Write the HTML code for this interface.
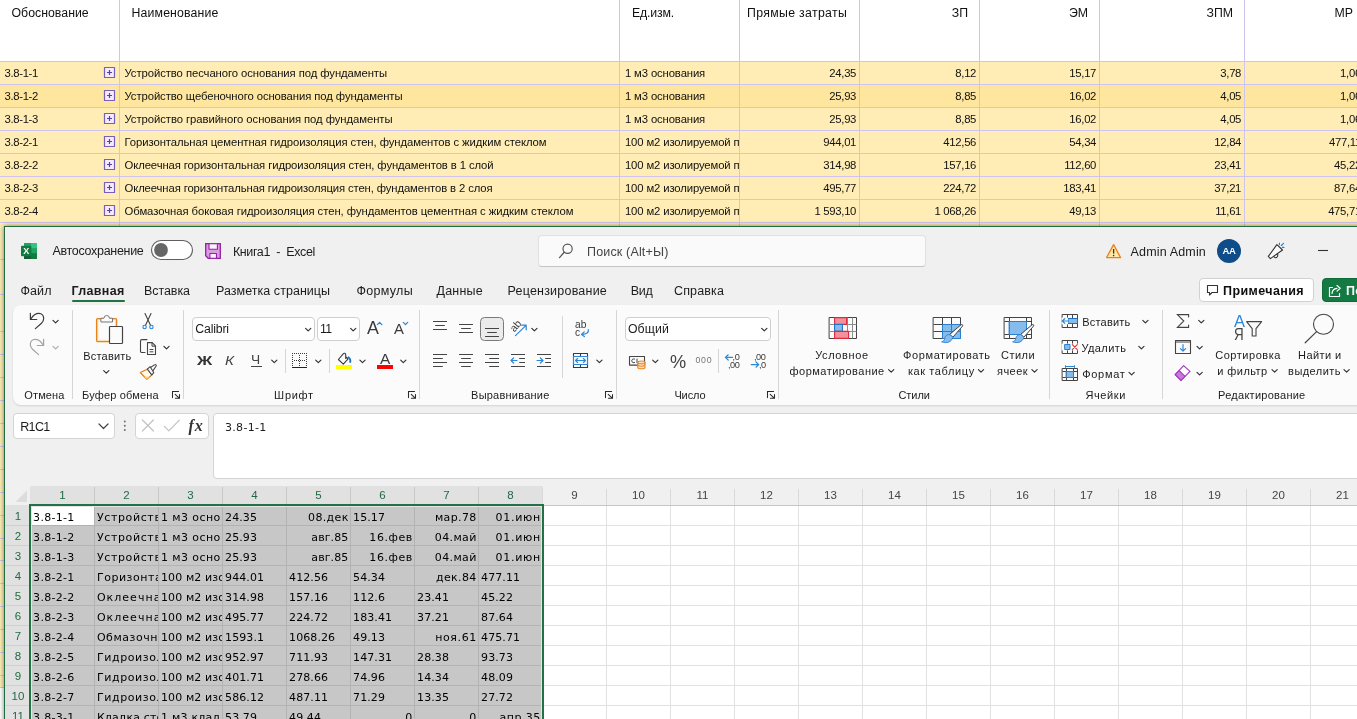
<!DOCTYPE html>
<html lang="ru"><head><meta charset="utf-8"><title>Excel</title>
<style>
html,body{margin:0;padding:0}
body{width:1357px;height:719px;overflow:hidden;position:relative;background:#FFEDB5;font-family:"Liberation Sans",sans-serif}
#bx div{position:absolute;box-sizing:border-box}
#tx{will-change:transform}
#tx span{position:absolute;white-space:pre;line-height:1;display:block}
#tx span.c{overflow:hidden}
#ic{position:absolute;left:0;top:0;width:1357px;height:719px;overflow:hidden;will-change:transform}
.dj{font-family:"DejaVu Sans","Liberation Sans",sans-serif}
.se{font-family:"Liberation Serif",serif}
</style></head><body>
<div id="bx">
<div style="left:0px;top:0px;width:1357px;height:61px;background:#FFFFFF;"></div>
<div style="left:0px;top:84px;width:1357px;height:23px;background:#FFE69E;"></div>
<div style="left:0px;top:61px;width:1357px;height:1px;background:#CDC4F0;"></div>
<div style="left:0px;top:84px;width:1357px;height:1px;background:#CDC4F0;"></div>
<div style="left:0px;top:107px;width:1357px;height:1px;background:#CDC4F0;"></div>
<div style="left:0px;top:130px;width:1357px;height:1px;background:#CDC4F0;"></div>
<div style="left:0px;top:153px;width:1357px;height:1px;background:#CDC4F0;"></div>
<div style="left:0px;top:176px;width:1357px;height:1px;background:#CDC4F0;"></div>
<div style="left:0px;top:199px;width:1357px;height:1px;background:#CDC4F0;"></div>
<div style="left:0px;top:222px;width:1357px;height:1px;background:#CDC4F0;"></div>
<div style="left:119px;top:0px;width:1px;height:226px;background:#CDC4F0;"></div>
<div style="left:619px;top:0px;width:1px;height:226px;background:#CDC4F0;"></div>
<div style="left:739px;top:0px;width:1px;height:226px;background:#CDC4F0;"></div>
<div style="left:859px;top:0px;width:1px;height:226px;background:#CDC4F0;"></div>
<div style="left:979px;top:0px;width:1px;height:226px;background:#CDC4F0;"></div>
<div style="left:1099px;top:0px;width:1px;height:226px;background:#CDC4F0;"></div>
<div style="left:1244px;top:0px;width:1px;height:226px;background:#CDC4F0;"></div>
<div style="left:0px;top:259px;width:4px;height:1px;background:#CDC4F0;"></div>
<div style="left:0px;top:294px;width:4px;height:1px;background:#CDC4F0;"></div>
<div style="left:0px;top:331px;width:4px;height:1px;background:#CDC4F0;"></div>
<div style="left:0px;top:354px;width:4px;height:1px;background:#CDC4F0;"></div>
<div style="left:0px;top:377px;width:4px;height:1px;background:#CDC4F0;"></div>
<div style="left:0px;top:400px;width:4px;height:1px;background:#CDC4F0;"></div>
<div style="left:0px;top:423px;width:4px;height:1px;background:#CDC4F0;"></div>
<div style="left:0px;top:446px;width:4px;height:1px;background:#CDC4F0;"></div>
<div style="left:0px;top:469px;width:4px;height:1px;background:#CDC4F0;"></div>
<div style="left:0px;top:492px;width:4px;height:1px;background:#CDC4F0;"></div>
<div style="left:0px;top:515px;width:4px;height:1px;background:#CDC4F0;"></div>
<div style="left:0px;top:538px;width:4px;height:1px;background:#CDC4F0;"></div>
<div style="left:0px;top:560px;width:4px;height:1px;background:#CDC4F0;"></div>
<div style="left:0px;top:583px;width:4px;height:1px;background:#CDC4F0;"></div>
<div style="left:0px;top:606px;width:4px;height:1px;background:#CDC4F0;"></div>
<div style="left:0px;top:629px;width:4px;height:1px;background:#CDC4F0;"></div>
<div style="left:0px;top:652px;width:4px;height:1px;background:#CDC4F0;"></div>
<div style="left:0px;top:675px;width:4px;height:1px;background:#CDC4F0;"></div>
<div style="left:0px;top:687px;width:4px;height:1px;background:#CDC4F0;"></div>
<div style="left:0px;top:688px;width:4px;height:40px;background:#FFFFFF;"></div>
<div style="left:4px;top:226px;width:1360px;height:500px;background:#F0F0F0;border-left:1px solid #1E6E42;border-top:1px solid #1E6E42;box-shadow:0 0 5px rgba(0,0,0,.5), inset 1px 1px 0 #FAF6F8"></div>
<div style="left:538px;top:235px;width:388px;height:32px;background:#FAFAFA;border:1px solid #E0E0E0;border-bottom-color:#C4C4C4;border-radius:4px"></div>
<div style="left:72px;top:300px;width:53px;height:2px;background:#217346;border-radius:1px"></div>
<div style="left:1199px;top:278px;width:115px;height:24px;background:#FFFFFF;border:1px solid #D1D1D1;border-radius:4px"></div>
<div style="left:1322px;top:278px;width:60px;height:24px;background:#127A42;border:1px solid #0F6B39;border-radius:4px"></div>
<div style="left:13px;top:305px;width:1360px;height:100px;background:#FBFBFB;border-radius:8px;box-shadow:0 1px 2px rgba(0,0,0,.12)"></div>
<div style="left:72px;top:310px;width:1px;height:89px;background:#D6D6D6;"></div>
<div style="left:183px;top:310px;width:1px;height:89px;background:#D6D6D6;"></div>
<div style="left:419px;top:310px;width:1px;height:89px;background:#D6D6D6;"></div>
<div style="left:616px;top:310px;width:1px;height:89px;background:#D6D6D6;"></div>
<div style="left:778px;top:310px;width:1px;height:89px;background:#D6D6D6;"></div>
<div style="left:1049px;top:310px;width:1px;height:89px;background:#D6D6D6;"></div>
<div style="left:1162px;top:310px;width:1px;height:89px;background:#D6D6D6;"></div>
<div style="left:562px;top:316px;width:1px;height:62px;background:#D6D6D6;"></div>
<div style="left:285px;top:349px;width:1px;height:24px;background:#D6D6D6;"></div>
<div style="left:329px;top:349px;width:1px;height:24px;background:#D6D6D6;"></div>
<div style="left:718px;top:349px;width:1px;height:24px;background:#D6D6D6;"></div>
<div style="left:192px;top:317px;width:123px;height:24px;background:#FFFFFF;border:1px solid #CFCFCF;border-radius:4px"></div>
<div style="left:317px;top:317px;width:43px;height:24px;background:#FFFFFF;border:1px solid #CFCFCF;border-radius:4px"></div>
<div style="left:625px;top:317px;width:146px;height:24px;background:#FFFFFF;border:1px solid #CFCFCF;border-radius:4px"></div>
<div style="left:480px;top:317px;width:24px;height:24px;background:#EBEBEB;border:1px solid #7A7A7A;border-radius:4.5px"></div>
<div style="left:251px;top:366px;width:10.5px;height:1px;background:#444;"></div>
<div style="left:13px;top:413px;width:102px;height:26px;background:#FFFFFF;border:1px solid #D4D4D4;border-radius:4px"></div>
<div style="left:135px;top:413px;width:74px;height:26px;background:#FFFFFF;border:1px solid #D4D4D4;border-radius:4px"></div>
<div style="left:213px;top:413px;width:1160px;height:66px;background:#FFFFFF;border:1px solid #D4D4D4;border-radius:4px"></div>
<div style="left:30px;top:505px;width:1327px;height:214px;background:#FFFFFF;"></div>
<div style="left:5px;top:486px;width:25px;height:19px;background:#F0F0F0;"></div>
<div style="left:30px;top:486px;width:513px;height:18px;background:#E1E1E1;"></div>
<div style="left:5px;top:505px;width:25px;height:214px;background:#E1E1E1;"></div>
<div style="left:543px;top:505px;width:814px;height:1px;background:#C6C6C6;"></div>
<div style="left:31px;top:506px;width:511px;height:213px;background:#C7C7C7;"></div>
<div style="left:31px;top:506px;width:63px;height:19px;background:#FFFFFF;"></div>
<div style="left:94px;top:487px;width:1px;height:17px;background:#C9C9C9;"></div>
<div style="left:94px;top:506px;width:1px;height:213px;background:#B3B3B3;"></div>
<div style="left:158px;top:487px;width:1px;height:17px;background:#C9C9C9;"></div>
<div style="left:158px;top:506px;width:1px;height:213px;background:#B3B3B3;"></div>
<div style="left:222px;top:487px;width:1px;height:17px;background:#C9C9C9;"></div>
<div style="left:222px;top:506px;width:1px;height:213px;background:#B3B3B3;"></div>
<div style="left:286px;top:487px;width:1px;height:17px;background:#C9C9C9;"></div>
<div style="left:286px;top:506px;width:1px;height:213px;background:#B3B3B3;"></div>
<div style="left:350px;top:487px;width:1px;height:17px;background:#C9C9C9;"></div>
<div style="left:350px;top:506px;width:1px;height:213px;background:#B3B3B3;"></div>
<div style="left:414px;top:487px;width:1px;height:17px;background:#C9C9C9;"></div>
<div style="left:414px;top:506px;width:1px;height:213px;background:#B3B3B3;"></div>
<div style="left:478px;top:487px;width:1px;height:17px;background:#C9C9C9;"></div>
<div style="left:478px;top:506px;width:1px;height:213px;background:#B3B3B3;"></div>
<div style="left:542px;top:489px;width:1px;height:16px;background:#D9D9D9;"></div>
<div style="left:606px;top:489px;width:1px;height:16px;background:#D9D9D9;"></div>
<div style="left:606px;top:506px;width:1px;height:213px;background:#E1E1E1;"></div>
<div style="left:670px;top:489px;width:1px;height:16px;background:#D9D9D9;"></div>
<div style="left:670px;top:506px;width:1px;height:213px;background:#E1E1E1;"></div>
<div style="left:734px;top:489px;width:1px;height:16px;background:#D9D9D9;"></div>
<div style="left:734px;top:506px;width:1px;height:213px;background:#E1E1E1;"></div>
<div style="left:798px;top:489px;width:1px;height:16px;background:#D9D9D9;"></div>
<div style="left:798px;top:506px;width:1px;height:213px;background:#E1E1E1;"></div>
<div style="left:862px;top:489px;width:1px;height:16px;background:#D9D9D9;"></div>
<div style="left:862px;top:506px;width:1px;height:213px;background:#E1E1E1;"></div>
<div style="left:926px;top:489px;width:1px;height:16px;background:#D9D9D9;"></div>
<div style="left:926px;top:506px;width:1px;height:213px;background:#E1E1E1;"></div>
<div style="left:990px;top:489px;width:1px;height:16px;background:#D9D9D9;"></div>
<div style="left:990px;top:506px;width:1px;height:213px;background:#E1E1E1;"></div>
<div style="left:1054px;top:489px;width:1px;height:16px;background:#D9D9D9;"></div>
<div style="left:1054px;top:506px;width:1px;height:213px;background:#E1E1E1;"></div>
<div style="left:1118px;top:489px;width:1px;height:16px;background:#D9D9D9;"></div>
<div style="left:1118px;top:506px;width:1px;height:213px;background:#E1E1E1;"></div>
<div style="left:1182px;top:489px;width:1px;height:16px;background:#D9D9D9;"></div>
<div style="left:1182px;top:506px;width:1px;height:213px;background:#E1E1E1;"></div>
<div style="left:1246px;top:489px;width:1px;height:16px;background:#D9D9D9;"></div>
<div style="left:1246px;top:506px;width:1px;height:213px;background:#E1E1E1;"></div>
<div style="left:1310px;top:489px;width:1px;height:16px;background:#D9D9D9;"></div>
<div style="left:1310px;top:506px;width:1px;height:213px;background:#E1E1E1;"></div>
<div style="left:31px;top:525px;width:511px;height:1px;background:#B3B3B3;"></div>
<div style="left:543px;top:525px;width:814px;height:1px;background:#E1E1E1;"></div>
<div style="left:5px;top:525px;width:24px;height:1px;background:#CFCFCF;"></div>
<div style="left:31px;top:545px;width:511px;height:1px;background:#B3B3B3;"></div>
<div style="left:543px;top:545px;width:814px;height:1px;background:#E1E1E1;"></div>
<div style="left:5px;top:545px;width:24px;height:1px;background:#CFCFCF;"></div>
<div style="left:31px;top:565px;width:511px;height:1px;background:#B3B3B3;"></div>
<div style="left:543px;top:565px;width:814px;height:1px;background:#E1E1E1;"></div>
<div style="left:5px;top:565px;width:24px;height:1px;background:#CFCFCF;"></div>
<div style="left:31px;top:585px;width:511px;height:1px;background:#B3B3B3;"></div>
<div style="left:543px;top:585px;width:814px;height:1px;background:#E1E1E1;"></div>
<div style="left:5px;top:585px;width:24px;height:1px;background:#CFCFCF;"></div>
<div style="left:31px;top:605px;width:511px;height:1px;background:#B3B3B3;"></div>
<div style="left:543px;top:605px;width:814px;height:1px;background:#E1E1E1;"></div>
<div style="left:5px;top:605px;width:24px;height:1px;background:#CFCFCF;"></div>
<div style="left:31px;top:625px;width:511px;height:1px;background:#B3B3B3;"></div>
<div style="left:543px;top:625px;width:814px;height:1px;background:#E1E1E1;"></div>
<div style="left:5px;top:625px;width:24px;height:1px;background:#CFCFCF;"></div>
<div style="left:31px;top:645px;width:511px;height:1px;background:#B3B3B3;"></div>
<div style="left:543px;top:645px;width:814px;height:1px;background:#E1E1E1;"></div>
<div style="left:5px;top:645px;width:24px;height:1px;background:#CFCFCF;"></div>
<div style="left:31px;top:665px;width:511px;height:1px;background:#B3B3B3;"></div>
<div style="left:543px;top:665px;width:814px;height:1px;background:#E1E1E1;"></div>
<div style="left:5px;top:665px;width:24px;height:1px;background:#CFCFCF;"></div>
<div style="left:31px;top:685px;width:511px;height:1px;background:#B3B3B3;"></div>
<div style="left:543px;top:685px;width:814px;height:1px;background:#E1E1E1;"></div>
<div style="left:5px;top:685px;width:24px;height:1px;background:#CFCFCF;"></div>
<div style="left:31px;top:705px;width:511px;height:1px;background:#B3B3B3;"></div>
<div style="left:543px;top:705px;width:814px;height:1px;background:#E1E1E1;"></div>
<div style="left:5px;top:705px;width:24px;height:1px;background:#CFCFCF;"></div>
<div style="left:29px;top:504px;width:515px;height:2px;background:#217346;"></div>
<div style="left:29px;top:504px;width:2px;height:215px;background:#217346;"></div>
<div style="left:542px;top:504px;width:2px;height:215px;background:#217346;"></div>
<div style="left:31px;top:506px;width:511px;height:1px;background:#E6E6E6;"></div>
<div style="left:31px;top:506px;width:1px;height:213px;background:#E6E6E6;"></div>
<div style="left:541px;top:506px;width:1px;height:213px;background:#E6E6E6;"></div>
</div>
<svg id="ic" width="1357" height="719" viewBox="0 0 1357 719" fill="none" stroke-linecap="round" stroke-linejoin="round">
<rect x="104.5" y="67.5" width="10" height="10" fill="#F3ECFF" stroke="#7A5DB8" stroke-width="1.2"/><path d="M107 72.5H112M109.5 70V75" stroke="#5B3FA0" stroke-width="1.2" stroke-linecap="butt"/>
<rect x="104.5" y="90.5" width="10" height="10" fill="#F3ECFF" stroke="#7A5DB8" stroke-width="1.2"/><path d="M107 95.5H112M109.5 93V98" stroke="#5B3FA0" stroke-width="1.2" stroke-linecap="butt"/>
<rect x="104.5" y="113.5" width="10" height="10" fill="#F3ECFF" stroke="#7A5DB8" stroke-width="1.2"/><path d="M107 118.5H112M109.5 116V121" stroke="#5B3FA0" stroke-width="1.2" stroke-linecap="butt"/>
<rect x="104.5" y="136.5" width="10" height="10" fill="#F3ECFF" stroke="#7A5DB8" stroke-width="1.2"/><path d="M107 141.5H112M109.5 139V144" stroke="#5B3FA0" stroke-width="1.2" stroke-linecap="butt"/>
<rect x="104.5" y="159.5" width="10" height="10" fill="#F3ECFF" stroke="#7A5DB8" stroke-width="1.2"/><path d="M107 164.5H112M109.5 162V167" stroke="#5B3FA0" stroke-width="1.2" stroke-linecap="butt"/>
<rect x="104.5" y="182.5" width="10" height="10" fill="#F3ECFF" stroke="#7A5DB8" stroke-width="1.2"/><path d="M107 187.5H112M109.5 185V190" stroke="#5B3FA0" stroke-width="1.2" stroke-linecap="butt"/>
<rect x="104.5" y="205.5" width="10" height="10" fill="#F3ECFF" stroke="#7A5DB8" stroke-width="1.2"/><path d="M107 210.5H112M109.5 208V213" stroke="#5B3FA0" stroke-width="1.2" stroke-linecap="butt"/>
<path d="M27 490.5V502H15.5Z" fill="#DCDCDC" stroke="none"/>
<path d="M53.00 320.40L55.60 322.90L58.20 320.40" stroke="#333333" stroke-width="1.2"/>
<path d="M103.70 370.60L106.30 373.10L108.90 370.60" stroke="#333333" stroke-width="1.2"/>
<path d="M163.90 346.40L166.50 348.90L169.10 346.40" stroke="#333333" stroke-width="1.2"/>
<path d="M305.60 328.40L308.20 330.90L310.80 328.40" stroke="#333333" stroke-width="1.2"/>
<path d="M350.60 328.40L353.20 330.90L355.80 328.40" stroke="#333333" stroke-width="1.2"/>
<path d="M271.70 360.10L274.30 362.60L276.90 360.10" stroke="#333333" stroke-width="1.2"/>
<path d="M315.70 360.10L318.30 362.60L320.90 360.10" stroke="#333333" stroke-width="1.2"/>
<path d="M359.90 360.10L362.50 362.60L365.10 360.10" stroke="#333333" stroke-width="1.2"/>
<path d="M400.70 360.10L403.30 362.60L405.90 360.10" stroke="#333333" stroke-width="1.2"/>
<path d="M531.80 328.40L534.40 330.90L537.00 328.40" stroke="#333333" stroke-width="1.2"/>
<path d="M596.80 360.10L599.40 362.60L602.00 360.10" stroke="#333333" stroke-width="1.2"/>
<path d="M652.70 360.10L655.30 362.60L657.90 360.10" stroke="#333333" stroke-width="1.2"/>
<path d="M761.70 328.40L764.30 330.90L766.90 328.40" stroke="#333333" stroke-width="1.2"/>
<path d="M888.60 369.60L891.20 372.10L893.80 369.60" stroke="#333333" stroke-width="1.2"/>
<path d="M978.40 369.60L981.00 372.10L983.60 369.60" stroke="#333333" stroke-width="1.2"/>
<path d="M1031.90 369.60L1034.50 372.10L1037.10 369.60" stroke="#333333" stroke-width="1.2"/>
<path d="M1142.80 320.40L1145.40 322.90L1148.00 320.40" stroke="#333333" stroke-width="1.2"/>
<path d="M1138.80 346.40L1141.40 348.90L1144.00 346.40" stroke="#333333" stroke-width="1.2"/>
<path d="M1129.00 372.40L1131.60 374.90L1134.20 372.40" stroke="#333333" stroke-width="1.2"/>
<path d="M1198.70 320.40L1201.30 322.90L1203.90 320.40" stroke="#333333" stroke-width="1.2"/>
<path d="M1197.00 346.40L1199.60 348.90L1202.20 346.40" stroke="#333333" stroke-width="1.2"/>
<path d="M1197.00 372.40L1199.60 374.90L1202.20 372.40" stroke="#333333" stroke-width="1.2"/>
<path d="M1272.00 369.60L1274.60 372.10L1277.20 369.60" stroke="#333333" stroke-width="1.2"/>
<path d="M1344.00 369.60L1346.60 372.10L1349.20 369.60" stroke="#333333" stroke-width="1.2"/>
<path d="M53.00 346.40L55.60 348.90L58.20 346.40" stroke="#ABABAB" stroke-width="1.2"/>
<path d="M99 424L103.5 428.5L108 424" stroke="#444" stroke-width="1.2"/>
<path d="M178.6 391.5H172.5V397.6M175.2 394.4L179.3 398.1M179.5 394.5V398.3H175.4" stroke="#2A2A2A" stroke-width="1.05" stroke-linecap="round" stroke-linejoin="miter"/>
<path d="M414.6 391.5H408.5V397.6M411.2 394.4L415.3 398.1M415.5 394.5V398.3H411.4" stroke="#2A2A2A" stroke-width="1.05" stroke-linecap="round" stroke-linejoin="miter"/>
<path d="M611.6 391.5H605.5V397.6M608.2 394.4L612.3 398.1M612.5 394.5V398.3H608.4" stroke="#2A2A2A" stroke-width="1.05" stroke-linecap="round" stroke-linejoin="miter"/>
<path d="M773.6 391.5H767.5V397.6M770.2 394.4L774.3 398.1M774.5 394.5V398.3H770.4" stroke="#2A2A2A" stroke-width="1.05" stroke-linecap="round" stroke-linejoin="miter"/>
<rect x="24" y="243" width="13" height="16" rx="1" fill="#21A366" stroke="none"/><rect x="31" y="243" width="6" height="5.3" fill="#33C481" stroke="none"/><rect x="24" y="243" width="7" height="5.3" fill="#21A366" stroke="none"/><rect x="24" y="248.3" width="7" height="5.3" fill="#107C41" stroke="none"/><rect x="31" y="248.3" width="6" height="5.3" fill="#21A366" stroke="none"/><rect x="24" y="253.6" width="13" height="5.4" fill="#185C37" stroke="none"/><rect x="31" y="253.6" width="6" height="5.4" fill="#107C41" stroke="none"/><rect x="21" y="245.8" width="10.4" height="10.4" rx="1" fill="#107C41" stroke="none"/><text x="26.2" y="254.3" font-family="Liberation Sans,sans-serif" font-size="9" font-weight="700" fill="#fff" stroke="none" text-anchor="middle">X</text>
<rect x="151.5" y="240.5" width="41" height="19" rx="9.5" fill="#FFFFFF" stroke="#606060" stroke-width="1.15"/><circle cx="161" cy="250" r="6.9" fill="#666666" stroke="none"/>
<path d="M205.7 243.7H220.3V258.3H208.2L205.7 255.8Z" fill="#DC9BE3" stroke="#951FA5" stroke-width="1.3" stroke-linejoin="miter"/><rect x="209" y="243.7" width="8.4" height="5.6" fill="#F7F3F8" stroke="#951FA5" stroke-width="1.1"/><rect x="209.9" y="253.5" width="6.6" height="4.8" fill="#F7F3F8" stroke="#951FA5" stroke-width="1.1"/>
<circle cx="567.6" cy="248.8" r="4.6" stroke="#555" stroke-width="1.2"/><path d="M564.2 252.3L559.5 257.6" stroke="#555" stroke-width="1.3"/>
<path d="M1113.6 244.6L1120.6 257.6H1106.6Z" fill="#FFE7A8" stroke="#E8821E" stroke-width="1.3"/><path d="M1113.6 249V253.6" stroke="#333" stroke-width="1.3" stroke-linecap="butt"/><circle cx="1113.6" cy="255.6" r="0.8" fill="#333" stroke="none"/>
<circle cx="1229" cy="251" r="12" fill="#0F4C8A" stroke="none"/><text x="1229" y="254.4" font-family="Liberation Sans,sans-serif" font-size="9.5" font-weight="700" fill="#fff" stroke="none" text-anchor="middle" letter-spacing="-0.3">AA</text>
<path d="M1276.9 244.6L1282.5 250L1270.4 258.6L1268.3 256.4Z" stroke="#333" stroke-width="1.1" fill="#FAFAFA"/><path d="M1273.8 256.4c.7 1.7 2.6 1.7 3.5.3c.6-1 .5-2.2.2-3.1" stroke="#333" stroke-width="1.1"/><path d="M1279.4 243.1v1.7M1281.3 245.5l2.3-2.2M1282.3 247.4h1.6" stroke="#1E7FD0" stroke-width="1.1"/>
<path d="M1318 250.5H1328" stroke="#333" stroke-width="1.1" stroke-linecap="butt"/>
<path d="M1207.5 285.5H1217.5V292.5H1212L1209.5 295V292.5H1207.5Z" stroke="#333" stroke-width="1.1" fill="none"/>
<path d="M1332.5 287.5H1329.5V296.5H1339.5V293.5" stroke="#fff" stroke-width="1.2"/><path d="M1332 293.5c.3-3.2 2.2-5 5-5.2M1337 285.5l3.2 2.8l-3.2 2.8" stroke="#fff" stroke-width="1.2"/>
<path d="M30.4 313.4V319.5H36.7" stroke="#3A3A3A" stroke-width="1.2"/><path d="M31 318.8C33 315.2 35.8 313.3 39 313.3C41.8 313.3 43.7 315.8 43.7 318.6C43.7 320.6 42.8 322 41.5 323.2L35.4 328.6" stroke="#3A3A3A" stroke-width="1.2"/>
<path d="M43.6 339.4V345.5H37.3" stroke="#A3A3A3" stroke-width="1.2"/><path d="M43 344.8C41 341.2 38.2 339.3 35 339.3C32.2 339.3 30.3 341.8 30.3 344.6C30.3 346.6 31.2 348 32.5 349.2L38.6 354.6" stroke="#A3A3A3" stroke-width="1.2"/>
<rect x="96.6" y="318.6" width="20" height="23" rx="1" fill="#FCE3B5" stroke="#E8821E" stroke-width="1.3"/><rect x="98.4" y="320.4" width="16.6" height="19.4" fill="#FBFBFB" stroke="none"/><path d="M100.9 321.6V318.2H104a2.7 2.7 0 0 1 5.4 0H112.5V321.6Z" fill="#FBFBFB" stroke="#777" stroke-width="1"/><rect x="109.5" y="326.5" width="13" height="17" rx="0.8" fill="#FBFBFB" stroke="#444" stroke-width="1.2"/>
<path d="M145 313.6L150.6 325.6M151 313.6L145.4 325.6" stroke="#444" stroke-width="1.1"/><circle cx="144.6" cy="327" r="1.7" stroke="#2B88D8" stroke-width="1.1"/><circle cx="151.4" cy="327" r="1.7" stroke="#2B88D8" stroke-width="1.1"/>
<path d="M147 339.6H141.8a1.3 1.3 0 0 0-1.3 1.3V351.2a1.3 1.3 0 0 0 1.3 1.3H145" stroke="#444" stroke-width="1.1"/><path d="M147.5 342.6H152.2L155.5 346V354.5H147.5Z" stroke="#444" stroke-width="1.1" fill="#FBFBFB"/><path d="M152 342.8V346.2H155.3" stroke="#444" stroke-width="1"/><path d="M149.6 349.5H153.4M149.6 351.8H153.4" stroke="#444" stroke-width="1" stroke-linecap="butt"/>
<path d="M140.3 372.5L147.2 369.2L152 374.8L146.8 379.4Z" fill="#FFF8EC" stroke="#E07B10" stroke-width="1.2"/><path d="M144.3 376.4L146.8 379.2L149.6 376.7Z" fill="#FFD56A" stroke="none"/><path d="M150.8 367.3L154.5 364.9a1 1 0 0 1 1.5 1.4L153 370.6" fill="#FBFBFB" stroke="#444" stroke-width="1.05"/><path d="M147.4 369L150.2 366.7L153.8 372.7L151.8 374.9Z" fill="#FBFBFB" stroke="#444" stroke-width="1.05"/>
<path d="M377.4 324.6L379.6 322.4L381.8 324.6" stroke="#2B88D8" stroke-width="1.3"/><path d="M403.3 322.4L405.5 324.6L407.7 322.4" stroke="#2B88D8" stroke-width="1.3"/>
<path d="M292 353h1v1h-1zM294 353h1v1h-1zM296 353h1v1h-1zM298 353h1v1h-1zM300 353h1v1h-1zM302 353h1v1h-1zM304 353h1v1h-1zM306 353h1v1h-1zM292 355h1v1h-1zM306 355h1v1h-1zM292 357h1v1h-1zM306 357h1v1h-1zM292 359h1v1h-1zM306 359h1v1h-1zM292 361h1v1h-1zM306 361h1v1h-1zM292 363h1v1h-1zM306 363h1v1h-1zM292 365h1v1h-1zM306 365h1v1h-1zM299 355h1v1h-1zM299 357h1v1h-1zM299 363h1v1h-1zM299 365h1v1h-1zM294 360h1v1h-1zM296 360h1v1h-1zM302 360h1v1h-1zM304 360h1v1h-1zM299 359h1v1h-1zM298 360h1v1h-1zM300 360h1v1h-1zM299 361h1v1h-1z" fill="#3A3A3A" stroke="none" shape-rendering="crispEdges"/>
<rect x="292" y="367" width="15" height="1" fill="#222" stroke="none" shape-rendering="crispEdges"/>
<path d="M345.7 358.4V354.9c0-1.7-1.5-2.2-2.5-1.1L338.4 359.5L343.3 364.1L348.1 358.9L346 357" stroke="#3A3A3A" stroke-width="1.1" fill="none"/><path d="M347.7 357c2.1.9 3.1 3 2.4 5.8" stroke="#1E74C8" stroke-width="1.9" stroke-linecap="butt"/><rect x="336" y="365" width="16" height="4" fill="#FFFF00" stroke="none"/>
<rect x="377" y="365" width="16" height="4" fill="#FF0000" stroke="none"/>
<path d="M433 321.5H447M435.2 325.5H444.8M433 329.5H447" stroke="#444" stroke-width="1.2" stroke-linecap="butt"/>
<path d="M459 324.5H473M461.2 328.5H470.8M459 332.5H473" stroke="#444" stroke-width="1.2" stroke-linecap="butt"/>
<path d="M485 328.5H499M487.2 332.5H496.8M485 336.5H499" stroke="#444" stroke-width="1.2" stroke-linecap="butt"/>
<path d="M433 354.5H447M433 358.5H442.8M433 362.5H447M433 366.5H442.8" stroke="#444" stroke-width="1.2" stroke-linecap="butt"/>
<path d="M459 354.5H473M461.2 358.5H470.8M459 362.5H473M461.2 366.5H470.8" stroke="#444" stroke-width="1.2" stroke-linecap="butt"/>
<path d="M485 354.5H499M489.2 358.5H499M485 362.5H499M489.2 366.5H499" stroke="#444" stroke-width="1.2" stroke-linecap="butt"/>
<path d="M511 354.5H525M519.2 358.5H525M519.2 362.5H525M511 366.5H525" stroke="#444" stroke-width="1.2" stroke-linecap="butt"/>
<path d="M517 360.5H511.2M513.6 358L511 360.5L513.6 363" stroke="#2B88D8" stroke-width="1.2"/>
<path d="M537 354.5H551M545.2 358.5H551M545.2 362.5H551M537 366.5H551" stroke="#444" stroke-width="1.2" stroke-linecap="butt"/>
<path d="M537 360.5H542.8M540.4 358L543 360.5L540.4 363" stroke="#2B88D8" stroke-width="1.2"/>
<text transform="translate(514.4,332.6) rotate(-50)" font-family="Liberation Sans,sans-serif" font-size="10.5" fill="#3A3A3A" stroke="none">ab</text><path d="M515.5 335.6L526 325.4M521.6 325.2H526.2V329.8" stroke="#2B88D8" stroke-width="1.2"/>
<text x="575" y="328" font-family="Liberation Sans,sans-serif" font-size="10.2" fill="#3A3A3A" stroke="none" letter-spacing="0.2">ab</text><text x="575" y="335.8" font-family="Liberation Sans,sans-serif" font-size="10.2" fill="#3A3A3A" stroke="none">c</text><path d="M588.3 329.6c.6 2.6-1.6 4.8-6.4 4.7M584.2 332L581.5 334.4L584.4 336.6" stroke="#2B88D8" stroke-width="1.25"/>
<rect x="573.5" y="353.5" width="14" height="14" stroke="#3A3A3A" stroke-width="1.1"/><path d="M580.5 353.5V356.5M580.5 364.5V367.5" stroke="#3A3A3A" stroke-width="1.1" stroke-linecap="butt"/><rect x="573.5" y="356.5" width="14" height="8" fill="#F2F8FD" stroke="#2B88D8" stroke-width="1.1"/><path d="M575.6 360.5H585.4M577.6 358.5L575.5 360.5L577.6 362.5M583.4 358.5L585.5 360.5L583.4 362.5" stroke="#2B88D8" stroke-width="1.1"/>
<rect x="629.5" y="356.5" width="15" height="8.6" stroke="#444" stroke-width="1.1"/><path d="M634.6 359a2 2 0 1 0 0 3.6M637 359v3.6" stroke="#444" stroke-width="1"/><path d="M637.8 362.4v5a3.6 1.4 0 0 0 7.2 0v-5" fill="#FBE1C4" stroke="#E8821E" stroke-width="1.1"/><ellipse cx="641.4" cy="362.4" rx="3.6" ry="1.4" fill="#FBE1C4" stroke="#E8821E" stroke-width="1.1"/><path d="M637.8 364.9a3.6 1.4 0 0 0 7.2 0" stroke="#E8821E" stroke-width="1"/>
<path d="M732.6 357.4H725.6M728.2 354.8L725.4 357.4L728.2 360" stroke="#2B88D8" stroke-width="1.2"/><text x="732.6" y="359.7" font-family="Liberation Sans,sans-serif" font-size="9.2" fill="#3A3A3A" stroke="none" letter-spacing="-0.45">,0</text><text x="727.9" y="367.9" font-family="Liberation Sans,sans-serif" font-size="9.2" fill="#3A3A3A" stroke="none" letter-spacing="-0.45">,00</text>
<text x="754" y="359.7" font-family="Liberation Sans,sans-serif" font-size="9.2" fill="#3A3A3A" stroke="none" letter-spacing="-0.45">,00</text><text x="758.9" y="367.9" font-family="Liberation Sans,sans-serif" font-size="9.2" fill="#3A3A3A" stroke="none" letter-spacing="-0.45">,0</text><path d="M751.2 364.6H758.6M756 362L758.8 364.6L756 367.2" stroke="#2B88D8" stroke-width="1.2"/>
<rect x="829.5" y="317.5" width="27" height="21" fill="#FBFBFB" stroke="#444" stroke-width="1"/><path d="M834.5 317.5V338.5M847.5 317.5V338.5M852.5 317.5V338.5M829.5 324.5H856.5M829.5 331.5H856.5" stroke="#8E8E8E" stroke-width="1" stroke-linecap="butt"/><rect x="834.6" y="317.6" width="12" height="6.8" fill="#F4909C" stroke="#D92B3A" stroke-width="1.1"/><rect x="834.6" y="324.5" width="7.8" height="6.8" fill="#84BCEC" stroke="#1E78C8" stroke-width="1.1"/><rect x="834.6" y="331.4" width="14" height="7" fill="#F4909C" stroke="#D92B3A" stroke-width="1.1"/>
<rect x="933.5" y="317.5" width="27" height="21" fill="#FBFBFB" stroke="#444" stroke-width="1"/><rect x="942.5" y="324.5" width="18" height="14" fill="#86BCEB" stroke="none"/><path d="M942.5 317.5V338.5M951.5 317.5V338.5M933.5 324.5H960.5M933.5 331.5H960.5" stroke="#444" stroke-width="1" stroke-linecap="butt"/><path d="M942.5 324.5V338.5H960.5V324.5ZM951.5 324.5V338.5M942.5 331.5H960.5" stroke="#2B7FD0" stroke-width="1" stroke-linecap="butt"/>
<path d="M961.4 324.6c1-.4 1.8.4 1.2 1.4L952.9 337.20000000000005L949.8 334.8Z" fill="#FBFBFB" stroke="#444" stroke-width="1"/><path d="M949.6 334.6c-3.6-.2-4.6 2-5 4.6c-.2 1.2-1.4 2.2-3 2.6c4.6 1.8 10.4.6 11.2-4.6Z" fill="#86BCEB" stroke="#2B7FD0" stroke-width="0.9"/>
<rect x="1004.5" y="317.5" width="27" height="21" fill="#FBFBFB" stroke="#444" stroke-width="1"/><path d="M1009.5 317.5V338.5M1026.5 317.5V338.5M1004.5 321.5H1031.5M1004.5 334.5H1031.5" stroke="#444" stroke-width="1" stroke-linecap="butt"/><rect x="1009.5" y="321.5" width="17" height="13" fill="#86BCEB" stroke="#2B7FD0" stroke-width="1"/>
<path d="M1032.4 324.6c1-.4 1.8.4 1.2 1.4L1023.9000000000001 337.20000000000005L1020.8000000000001 334.8Z" fill="#FBFBFB" stroke="#444" stroke-width="1"/><path d="M1020.6000000000001 334.6c-3.6-.2-4.6 2-5 4.6c-.2 1.2-1.4 2.2-3 2.6c4.6 1.8 10.4.6 11.2-4.6Z" fill="#86BCEB" stroke="#2B7FD0" stroke-width="0.9"/>
<rect x="1062.5" y="314.5" width="15" height="13" fill="#FBFBFB" stroke="#444" stroke-width="1"/><path d="M1067.5 314.5V327.5M1072.5 314.5V327.5M1062.5 318.5H1077.5M1062.5 323.5H1077.5" stroke="#444" stroke-width="1" stroke-linecap="butt"/><rect x="1068.5" y="318.5" width="9" height="5" fill="#86BCEB" stroke="#1E6FC0" stroke-width="1"/><rect x="1061.5" y="317.6" width="6.5" height="6.8" fill="#FBFBFB" stroke="none"/><path d="M1068.4 321H1062.4M1064.8 318.6L1062.2 321L1064.8 323.4" stroke="#2B88D8" stroke-width="1.2"/>
<rect x="1062.5" y="340.5" width="15" height="13" fill="#FBFBFB" stroke="#444" stroke-width="1"/><path d="M1067.5 340.5V353.5M1072.5 340.5V353.5M1062.5 344.5H1077.5M1062.5 349.5H1077.5" stroke="#444" stroke-width="1" stroke-linecap="butt"/><rect x="1061.5" y="343.6" width="17.5" height="6.8" fill="#FBFBFB" stroke="none"/><rect x="1065" y="344.5" width="5" height="5" fill="#86BCEB" stroke="#2B7FD0" stroke-width="1"/><path d="M1072.3 344.6L1077.3 349.6M1077.3 344.6L1072.3 349.6" stroke="#E03030" stroke-width="1.1"/>
<path d="M1065.5 365.2V367.8M1074.5 365.2V367.8M1065.5 366.5H1074.5" stroke="#2B88D8" stroke-width="1" stroke-linecap="butt"/><rect x="1062.5" y="368.5" width="15" height="12" fill="#FBFBFB" stroke="#444" stroke-width="1"/><path d="M1066.5 368.5V380.5M1073.5 368.5V380.5M1062.5 371.5H1077.5M1062.5 377.5H1077.5" stroke="#444" stroke-width="1" stroke-linecap="butt"/><rect x="1066.5" y="371.5" width="7" height="6" fill="#86BCEB" stroke="#2B7FD0" stroke-width="1"/>
<path d="M1188.6 317V314.6H1177.4L1183.8 321L1177.4 327.4H1188.6V325" stroke="#444" stroke-width="1.1" stroke-linejoin="miter"/>
<rect x="1175.5" y="340.5" width="15" height="13" fill="#FBFBFB" stroke="#444" stroke-width="1.1"/><path d="M1175.5 342H1190.5" stroke="#444" stroke-width="1" stroke-linecap="butt"/><path d="M1183 344.6V351M1180.4 348.6L1183 351.2L1185.6 348.6" stroke="#2B88D8" stroke-width="1.2"/>
<path d="M1183.6 365.6L1190 371.4L1181 380.4L1175.2 374.6Z" fill="#FBFBFB" stroke="#A33BC2" stroke-width="1.2"/><path d="M1179.2 370.6L1185 376.4L1181 380.4L1175.2 374.6Z" fill="#C97AD8" stroke="#A33BC2" stroke-width="1.2"/>
<path d="M1246.6 321.6H1261.6L1256 328.6V336H1252.2V328.6Z" stroke="#444" stroke-width="1.1" fill="#FBFBFB"/>
<circle cx="1323.5" cy="324.3" r="10" stroke="#444" stroke-width="1.1"/><path d="M1316.6 331.6L1305.2 342.8" stroke="#444" stroke-width="1.2"/>
<circle cx="124.8" cy="421.5" r="1" fill="#707070" stroke="none"/><circle cx="124.8" cy="425.7" r="1" fill="#707070" stroke="none"/><circle cx="124.8" cy="429.9" r="1" fill="#707070" stroke="none"/>
<path d="M142.4 420L153.4 431M153.4 420L142.4 431" stroke="#C2C2C2" stroke-width="1.2"/><path d="M164.4 426.4L168.8 430.8L179.4 420.2" stroke="#C2C2C2" stroke-width="1.2"/>
</svg>
<div id="tx">
<span style="top:6.85px;font-size:12.3px;color:#111111;letter-spacing:0.021px;left:11.50px">Обоснование</span>
<span style="top:6.85px;font-size:12.3px;color:#111111;letter-spacing:0.146px;left:131.50px">Наименование</span>
<span style="top:6.85px;font-size:12.3px;color:#111111;letter-spacing:-0.153px;left:631.90px">Ед.изм.</span>
<span style="top:6.85px;font-size:12.3px;color:#111111;letter-spacing:0.331px;left:747.00px">Прямые затраты</span>
<span style="top:6.85px;font-size:12.3px;color:#111111;right:389.00px">ЗП</span>
<span style="top:6.85px;font-size:12.3px;color:#111111;right:269.00px">ЭМ</span>
<span style="top:6.85px;font-size:12.3px;color:#111111;right:124.00px">ЗПМ</span>
<span style="top:6.85px;font-size:12.3px;color:#111111;right:4.00px">МР</span>
<span style="top:67.55px;font-size:11.3px;color:#111111;letter-spacing:-0.328px;left:4.50px">3.8-1-1</span>
<span style="top:67.55px;font-size:11.3px;color:#111111;letter-spacing:-0.077px;left:124.50px">Устройство песчаного основания под фундаменты</span>
<span class="c" style="top:67.55px;font-size:11.3px;color:#111111;left:624.90px;width:114.10px;letter-spacing:-0.12px">1 м3 основания</span>
<span style="top:67.55px;font-size:11.3px;color:#111111;right:500.90px;letter-spacing:-0.3px">24,35</span>
<span style="top:67.55px;font-size:11.3px;color:#111111;right:380.90px;letter-spacing:-0.3px">8,12</span>
<span style="top:67.55px;font-size:11.3px;color:#111111;right:260.90px;letter-spacing:-0.3px">15,17</span>
<span style="top:67.55px;font-size:11.3px;color:#111111;right:115.90px;letter-spacing:-0.3px">3,78</span>
<span style="top:67.55px;font-size:11.3px;color:#111111;right:-3.90px;letter-spacing:-0.3px">1,06</span>
<span style="top:90.55px;font-size:11.3px;color:#111111;letter-spacing:-0.328px;left:4.50px">3.8-1-2</span>
<span style="top:90.55px;font-size:11.3px;color:#111111;letter-spacing:-0.085px;left:124.50px">Устройство щебеночного основания под фундаменты</span>
<span class="c" style="top:90.55px;font-size:11.3px;color:#111111;left:624.90px;width:114.10px;letter-spacing:-0.12px">1 м3 основания</span>
<span style="top:90.55px;font-size:11.3px;color:#111111;right:500.90px;letter-spacing:-0.3px">25,93</span>
<span style="top:90.55px;font-size:11.3px;color:#111111;right:380.90px;letter-spacing:-0.3px">8,85</span>
<span style="top:90.55px;font-size:11.3px;color:#111111;right:260.90px;letter-spacing:-0.3px">16,02</span>
<span style="top:90.55px;font-size:11.3px;color:#111111;right:115.90px;letter-spacing:-0.3px">4,05</span>
<span style="top:90.55px;font-size:11.3px;color:#111111;right:-3.90px;letter-spacing:-0.3px">1,06</span>
<span style="top:113.55px;font-size:11.3px;color:#111111;letter-spacing:-0.328px;left:4.50px">3.8-1-3</span>
<span style="top:113.55px;font-size:11.3px;color:#111111;letter-spacing:-0.069px;left:124.50px">Устройство гравийного основания под фундаменты</span>
<span class="c" style="top:113.55px;font-size:11.3px;color:#111111;left:624.90px;width:114.10px;letter-spacing:-0.12px">1 м3 основания</span>
<span style="top:113.55px;font-size:11.3px;color:#111111;right:500.90px;letter-spacing:-0.3px">25,93</span>
<span style="top:113.55px;font-size:11.3px;color:#111111;right:380.90px;letter-spacing:-0.3px">8,85</span>
<span style="top:113.55px;font-size:11.3px;color:#111111;right:260.90px;letter-spacing:-0.3px">16,02</span>
<span style="top:113.55px;font-size:11.3px;color:#111111;right:115.90px;letter-spacing:-0.3px">4,05</span>
<span style="top:113.55px;font-size:11.3px;color:#111111;right:-3.90px;letter-spacing:-0.3px">1,06</span>
<span style="top:136.55px;font-size:11.3px;color:#111111;letter-spacing:-0.328px;left:4.50px">3.8-2-1</span>
<span style="top:136.55px;font-size:11.3px;color:#111111;letter-spacing:-0.074px;left:124.50px">Горизонтальная цементная гидроизоляция стен, фундаментов с жидким стеклом</span>
<span class="c" style="top:136.55px;font-size:11.3px;color:#111111;left:624.90px;width:114.10px;letter-spacing:-0.12px">100 м2 изолируемой поверхности</span>
<span style="top:136.55px;font-size:11.3px;color:#111111;right:500.90px;letter-spacing:-0.3px">944,01</span>
<span style="top:136.55px;font-size:11.3px;color:#111111;right:380.90px;letter-spacing:-0.3px">412,56</span>
<span style="top:136.55px;font-size:11.3px;color:#111111;right:260.90px;letter-spacing:-0.3px">54,34</span>
<span style="top:136.55px;font-size:11.3px;color:#111111;right:115.90px;letter-spacing:-0.3px">12,84</span>
<span style="top:136.55px;font-size:11.3px;color:#111111;right:-3.90px;letter-spacing:-0.3px">477,11</span>
<span style="top:159.55px;font-size:11.3px;color:#111111;letter-spacing:-0.328px;left:4.50px">3.8-2-2</span>
<span style="top:159.55px;font-size:11.3px;color:#111111;letter-spacing:-0.102px;left:124.50px">Оклеечная горизонтальная гидроизоляция стен, фундаментов в 1 слой</span>
<span class="c" style="top:159.55px;font-size:11.3px;color:#111111;left:624.90px;width:114.10px;letter-spacing:-0.12px">100 м2 изолируемой поверхности</span>
<span style="top:159.55px;font-size:11.3px;color:#111111;right:500.90px;letter-spacing:-0.3px">314,98</span>
<span style="top:159.55px;font-size:11.3px;color:#111111;right:380.90px;letter-spacing:-0.3px">157,16</span>
<span style="top:159.55px;font-size:11.3px;color:#111111;right:260.90px;letter-spacing:-0.3px">112,60</span>
<span style="top:159.55px;font-size:11.3px;color:#111111;right:115.90px;letter-spacing:-0.3px">23,41</span>
<span style="top:159.55px;font-size:11.3px;color:#111111;right:-3.90px;letter-spacing:-0.3px">45,22</span>
<span style="top:182.55px;font-size:11.3px;color:#111111;letter-spacing:-0.328px;left:4.50px">3.8-2-3</span>
<span style="top:182.55px;font-size:11.3px;color:#111111;letter-spacing:-0.115px;left:124.50px">Оклеечная горизонтальная гидроизоляция стен, фундаментов в 2 слоя</span>
<span class="c" style="top:182.55px;font-size:11.3px;color:#111111;left:624.90px;width:114.10px;letter-spacing:-0.12px">100 м2 изолируемой поверхности</span>
<span style="top:182.55px;font-size:11.3px;color:#111111;right:500.90px;letter-spacing:-0.3px">495,77</span>
<span style="top:182.55px;font-size:11.3px;color:#111111;right:380.90px;letter-spacing:-0.3px">224,72</span>
<span style="top:182.55px;font-size:11.3px;color:#111111;right:260.90px;letter-spacing:-0.3px">183,41</span>
<span style="top:182.55px;font-size:11.3px;color:#111111;right:115.90px;letter-spacing:-0.3px">37,21</span>
<span style="top:182.55px;font-size:11.3px;color:#111111;right:-3.90px;letter-spacing:-0.3px">87,64</span>
<span style="top:205.55px;font-size:11.3px;color:#111111;letter-spacing:-0.328px;left:4.50px">3.8-2-4</span>
<span style="top:205.55px;font-size:11.3px;color:#111111;letter-spacing:-0.055px;left:124.50px">Обмазочная боковая гидроизоляция стен, фундаментов цементная с жидким стеклом</span>
<span class="c" style="top:205.55px;font-size:11.3px;color:#111111;left:624.90px;width:114.10px;letter-spacing:-0.12px">100 м2 изолируемой поверхности</span>
<span style="top:205.55px;font-size:11.3px;color:#111111;right:500.90px;letter-spacing:-0.3px">1 593,10</span>
<span style="top:205.55px;font-size:11.3px;color:#111111;right:380.90px;letter-spacing:-0.3px">1 068,26</span>
<span style="top:205.55px;font-size:11.3px;color:#111111;right:260.90px;letter-spacing:-0.3px">49,13</span>
<span style="top:205.55px;font-size:11.3px;color:#111111;right:115.90px;letter-spacing:-0.3px">11,61</span>
<span style="top:205.55px;font-size:11.3px;color:#111111;right:-3.90px;letter-spacing:-0.3px">475,71</span>
<span style="top:244.75px;font-size:12.5px;color:#1C1C1C;letter-spacing:-0.307px;left:52.50px">Автосохранение</span>
<span style="top:245.75px;font-size:12.5px;color:#1C1C1C;letter-spacing:-0.374px;left:232.90px">Книга1  -  Excel</span>
<span style="top:245.75px;font-size:12.5px;color:#444;letter-spacing:0.162px;left:587.00px">Поиск (Alt+Ы)</span>
<span style="top:245.75px;font-size:12.5px;color:#1C1C1C;letter-spacing:0.168px;left:1130.50px">Admin Admin</span>
<span style="top:284.75px;font-size:12.5px;color:#1C1C1C;letter-spacing:0.066px;left:20.50px">Файл</span>
<span style="top:284.75px;font-size:12.5px;color:#1C1C1C;font-weight:700;letter-spacing:0.308px;left:71.50px">Главная</span>
<span style="top:284.75px;font-size:12.5px;color:#1C1C1C;letter-spacing:-0.067px;left:144.00px">Вставка</span>
<span style="top:284.75px;font-size:12.5px;color:#1C1C1C;letter-spacing:0.041px;left:216.00px">Разметка страницы</span>
<span style="top:284.75px;font-size:12.5px;color:#1C1C1C;letter-spacing:0.299px;left:356.50px">Формулы</span>
<span style="top:284.75px;font-size:12.5px;color:#1C1C1C;letter-spacing:0.221px;left:436.50px">Данные</span>
<span style="top:284.75px;font-size:12.5px;color:#1C1C1C;letter-spacing:0.212px;left:507.50px">Рецензирование</span>
<span style="top:284.75px;font-size:12.5px;color:#1C1C1C;letter-spacing:-0.308px;left:630.80px">Вид</span>
<span style="top:284.75px;font-size:12.5px;color:#1C1C1C;letter-spacing:0.136px;left:674.00px">Справка</span>
<span style="top:284.75px;font-size:12.5px;color:#0F0F0F;font-weight:700;letter-spacing:0.406px;left:1223.00px">Примечания</span>
<span style="top:284.75px;font-size:12.5px;color:#FFFFFF;font-weight:700;left:1345.90px;letter-spacing:0.4px">По</span>
<span style="top:322.85px;font-size:12.3px;color:#1C1C1C;letter-spacing:-0.180px;left:195.30px">Calibri</span>
<span style="top:322.85px;font-size:12.3px;color:#1C1C1C;letter-spacing:-0.683px;left:320.10px">11</span>
<span style="top:322.85px;font-size:12.3px;color:#1C1C1C;letter-spacing:0.126px;left:627.90px">Общий</span>
<span style="top:389.50px;font-size:11px;color:#1C1C1C;letter-spacing:0.122px;left:24.30px">Отмена</span>
<span style="top:389.50px;font-size:11px;color:#1C1C1C;letter-spacing:0.179px;left:82.00px">Буфер обмена</span>
<span style="top:389.50px;font-size:11px;color:#1C1C1C;letter-spacing:0.719px;left:274.10px">Шрифт</span>
<span style="top:389.50px;font-size:11px;color:#1C1C1C;letter-spacing:0.223px;left:471.10px">Выравнивание</span>
<span style="top:389.50px;font-size:11px;color:#1C1C1C;letter-spacing:-0.108px;left:674.40px">Число</span>
<span style="top:389.50px;font-size:11px;color:#1C1C1C;letter-spacing:-0.041px;left:898.40px">Стили</span>
<span style="top:389.50px;font-size:11px;color:#1C1C1C;letter-spacing:0.599px;left:1085.50px">Ячейки</span>
<span style="top:389.50px;font-size:11px;color:#1C1C1C;letter-spacing:0.257px;left:1218.10px">Редактирование</span>
<span style="top:350.50px;font-size:11px;color:#1C1C1C;letter-spacing:0.207px;left:83.20px">Вставить</span>
<span style="top:349.50px;font-size:11px;color:#1C1C1C;letter-spacing:0.628px;left:815.20px">Условное</span>
<span style="top:365.50px;font-size:11px;color:#1C1C1C;letter-spacing:0.491px;left:789.50px">форматирование</span>
<span style="top:349.50px;font-size:11px;color:#1C1C1C;letter-spacing:0.598px;left:903.10px">Форматировать</span>
<span style="top:365.50px;font-size:11px;color:#1C1C1C;letter-spacing:0.605px;left:907.90px">как таблицу</span>
<span style="top:349.50px;font-size:11px;color:#1C1C1C;letter-spacing:0.439px;left:1001.10px">Стили</span>
<span style="top:365.50px;font-size:11px;color:#1C1C1C;letter-spacing:0.410px;left:997.10px">ячеек</span>
<span style="top:316.50px;font-size:11px;color:#1C1C1C;letter-spacing:0.207px;left:1082.20px">Вставить</span>
<span style="top:342.50px;font-size:11px;color:#1C1C1C;letter-spacing:0.400px;left:1081.50px">Удалить</span>
<span style="top:368.50px;font-size:11px;color:#1C1C1C;letter-spacing:0.704px;left:1082.20px">Формат</span>
<span style="top:349.50px;font-size:11px;color:#1C1C1C;letter-spacing:0.542px;left:1215.20px">Сортировка</span>
<span style="top:365.50px;font-size:11px;color:#1C1C1C;letter-spacing:0.457px;left:1217.20px">и фильтр</span>
<span style="top:349.50px;font-size:11px;color:#1C1C1C;letter-spacing:0.444px;left:1298.00px">Найти и</span>
<span style="top:365.50px;font-size:11px;color:#1C1C1C;letter-spacing:0.454px;left:1288.10px">выделить</span>
<span style="top:354.00px;font-size:13px;color:#333;font-weight:700;transform:scaleX(1.294);transform-origin:0 50%;left:196.50px">Ж</span>
<span style="top:354.00px;font-size:13px;color:#444;font-style:italic;transform:scaleX(1.173);transform-origin:0 50%;left:225.30px">К</span>
<span style="top:353.75px;font-size:12.5px;color:#444;transform:scaleX(1.103);transform-origin:0 50%;left:251.30px">Ч</span>
<span style="top:320.20px;font-size:17.6px;color:#3A3A3A;transform:scaleX(1.013);transform-origin:0 50%;left:366.50px">A</span>
<span style="top:322.20px;font-size:14px;color:#3A3A3A;transform:scaleX(1.060);transform-origin:0 50%;left:394.10px">A</span>
<span style="top:350.85px;font-size:15.3px;color:#3A3A3A;transform:scaleX(1.009);transform-origin:0 50%;left:380.20px">A</span>
<span style="top:352.00px;font-size:19px;color:#444;transform:scaleX(0.958);transform-origin:0 50%;left:669.90px">%</span>
<span style="top:356.10px;font-size:8.8px;color:#777;letter-spacing:0.671px;left:695.50px">000</span>
<span style="top:313.60px;font-size:15.8px;color:#2B88D8;transform:scaleX(1.043);transform-origin:0 50%;left:1233.50px">A</span>
<span style="top:327.20px;font-size:15.8px;color:#444;transform:scaleX(0.849);transform-origin:0 50%;left:1234.30px">Я</span>
<span style="top:420.75px;font-size:12.5px;color:#1C1C1C;letter-spacing:-0.642px;left:20.20px">R1C1</span>
<span class="dj" style="top:422.00px;font-size:11px;color:#1C1C1C;letter-spacing:0.295px;left:225.00px">3.8-1-1</span>
<span class="se" style="top:417.50px;font-size:16px;color:#333;font-weight:700;font-style:italic;letter-spacing:0.836px;left:188.50px">fx</span>
<span style="top:490.25px;font-size:11.5px;color:#1E6B41;left:2.50px;width:120px;text-align:center">1</span>
<span style="top:490.25px;font-size:11.5px;color:#1E6B41;left:66.50px;width:120px;text-align:center">2</span>
<span style="top:490.25px;font-size:11.5px;color:#1E6B41;left:130.50px;width:120px;text-align:center">3</span>
<span style="top:490.25px;font-size:11.5px;color:#1E6B41;left:194.50px;width:120px;text-align:center">4</span>
<span style="top:490.25px;font-size:11.5px;color:#1E6B41;left:258.50px;width:120px;text-align:center">5</span>
<span style="top:490.25px;font-size:11.5px;color:#1E6B41;left:322.50px;width:120px;text-align:center">6</span>
<span style="top:490.25px;font-size:11.5px;color:#1E6B41;left:386.50px;width:120px;text-align:center">7</span>
<span style="top:490.25px;font-size:11.5px;color:#1E6B41;left:450.50px;width:120px;text-align:center">8</span>
<span style="top:490.25px;font-size:11.5px;color:#444;left:514.50px;width:120px;text-align:center">9</span>
<span style="top:490.25px;font-size:11.5px;color:#444;left:578.50px;width:120px;text-align:center">10</span>
<span style="top:490.25px;font-size:11.5px;color:#444;left:642.50px;width:120px;text-align:center">11</span>
<span style="top:490.25px;font-size:11.5px;color:#444;left:706.50px;width:120px;text-align:center">12</span>
<span style="top:490.25px;font-size:11.5px;color:#444;left:770.50px;width:120px;text-align:center">13</span>
<span style="top:490.25px;font-size:11.5px;color:#444;left:834.50px;width:120px;text-align:center">14</span>
<span style="top:490.25px;font-size:11.5px;color:#444;left:898.50px;width:120px;text-align:center">15</span>
<span style="top:490.25px;font-size:11.5px;color:#444;left:962.50px;width:120px;text-align:center">16</span>
<span style="top:490.25px;font-size:11.5px;color:#444;left:1026.50px;width:120px;text-align:center">17</span>
<span style="top:490.25px;font-size:11.5px;color:#444;left:1090.50px;width:120px;text-align:center">18</span>
<span style="top:490.25px;font-size:11.5px;color:#444;left:1154.50px;width:120px;text-align:center">19</span>
<span style="top:490.25px;font-size:11.5px;color:#444;left:1218.50px;width:120px;text-align:center">20</span>
<span style="top:490.25px;font-size:11.5px;color:#444;left:1282.50px;width:120px;text-align:center">21</span>
<span style="top:511.25px;font-size:11.5px;color:#1E6B41;left:-42.10px;width:120px;text-align:center">1</span>
<span style="top:531.25px;font-size:11.5px;color:#1E6B41;left:-42.10px;width:120px;text-align:center">2</span>
<span style="top:551.25px;font-size:11.5px;color:#1E6B41;left:-42.10px;width:120px;text-align:center">3</span>
<span style="top:571.25px;font-size:11.5px;color:#1E6B41;left:-42.10px;width:120px;text-align:center">4</span>
<span style="top:591.25px;font-size:11.5px;color:#1E6B41;left:-42.10px;width:120px;text-align:center">5</span>
<span style="top:611.25px;font-size:11.5px;color:#1E6B41;left:-42.10px;width:120px;text-align:center">6</span>
<span style="top:631.25px;font-size:11.5px;color:#1E6B41;left:-42.10px;width:120px;text-align:center">7</span>
<span style="top:651.25px;font-size:11.5px;color:#1E6B41;left:-42.10px;width:120px;text-align:center">8</span>
<span style="top:671.25px;font-size:11.5px;color:#1E6B41;left:-42.10px;width:120px;text-align:center">9</span>
<span style="top:691.25px;font-size:11.5px;color:#1E6B41;left:-42.10px;width:120px;text-align:center">10</span>
<span style="top:711.25px;font-size:11.5px;color:#1E6B41;left:-42.10px;width:120px;text-align:center">11</span>
<span class="dj" style="top:512.00px;font-size:11px;color:#000;letter-spacing:0.295px;left:33.10px">3.8-1-1</span>
<span class="dj c" style="top:512.00px;font-size:11px;color:#000;left:96.90px;width:61.10px;letter-spacing:0.63px">Устройство песчаного основания</span>
<span class="dj c" style="top:512.00px;font-size:11px;color:#000;left:160.90px;width:59.10px;letter-spacing:0.42px">1 м3 основания</span>
<span class="dj c" style="top:512.00px;font-size:11px;color:#000;left:225.10px;width:60.90px;letter-spacing:0.08px">24.35</span>
<span class="dj" style="top:512.00px;font-size:11px;color:#000;letter-spacing:0.347px;right:1008.70px;margin-right:-0.347px">08.дек</span>
<span class="dj c" style="top:512.00px;font-size:11px;color:#000;left:353.10px;width:60.90px;letter-spacing:0.08px">15.17</span>
<span class="dj" style="top:512.00px;font-size:11px;color:#000;letter-spacing:0.381px;right:880.70px;margin-right:-0.381px">мар.78</span>
<span class="dj" style="top:512.00px;font-size:11px;color:#000;letter-spacing:0.732px;right:816.70px;margin-right:-0.732px">01.июн</span>
<span class="dj" style="top:532.00px;font-size:11px;color:#000;letter-spacing:0.295px;left:33.10px">3.8-1-2</span>
<span class="dj c" style="top:532.00px;font-size:11px;color:#000;left:96.90px;width:61.10px;letter-spacing:0.63px">Устройство щебеночного основания</span>
<span class="dj c" style="top:532.00px;font-size:11px;color:#000;left:160.90px;width:59.10px;letter-spacing:0.42px">1 м3 основания</span>
<span class="dj c" style="top:532.00px;font-size:11px;color:#000;left:225.10px;width:60.90px;letter-spacing:0.08px">25.93</span>
<span class="dj" style="top:532.00px;font-size:11px;color:#000;letter-spacing:0.100px;right:1008.70px;margin-right:-0.100px">авг.85</span>
<span class="dj" style="top:532.00px;font-size:11px;color:#000;letter-spacing:0.557px;right:944.70px;margin-right:-0.557px">16.фев</span>
<span class="dj" style="top:532.00px;font-size:11px;color:#000;letter-spacing:0.352px;right:880.70px;margin-right:-0.352px">04.май</span>
<span class="dj" style="top:532.00px;font-size:11px;color:#000;letter-spacing:0.732px;right:816.70px;margin-right:-0.732px">01.июн</span>
<span class="dj" style="top:552.00px;font-size:11px;color:#000;letter-spacing:0.295px;left:33.10px">3.8-1-3</span>
<span class="dj c" style="top:552.00px;font-size:11px;color:#000;left:96.90px;width:61.10px;letter-spacing:0.63px">Устройство гравийного основания</span>
<span class="dj c" style="top:552.00px;font-size:11px;color:#000;left:160.90px;width:59.10px;letter-spacing:0.42px">1 м3 основания</span>
<span class="dj c" style="top:552.00px;font-size:11px;color:#000;left:225.10px;width:60.90px;letter-spacing:0.08px">25.93</span>
<span class="dj" style="top:552.00px;font-size:11px;color:#000;letter-spacing:0.100px;right:1008.70px;margin-right:-0.100px">авг.85</span>
<span class="dj" style="top:552.00px;font-size:11px;color:#000;letter-spacing:0.557px;right:944.70px;margin-right:-0.557px">16.фев</span>
<span class="dj" style="top:552.00px;font-size:11px;color:#000;letter-spacing:0.352px;right:880.70px;margin-right:-0.352px">04.май</span>
<span class="dj" style="top:552.00px;font-size:11px;color:#000;letter-spacing:0.732px;right:816.70px;margin-right:-0.732px">01.июн</span>
<span class="dj" style="top:572.00px;font-size:11px;color:#000;letter-spacing:0.295px;left:33.10px">3.8-2-1</span>
<span class="dj c" style="top:572.00px;font-size:11px;color:#000;left:96.90px;width:61.10px;letter-spacing:0.53px">Горизонтальная цементная</span>
<span class="dj c" style="top:572.00px;font-size:11px;color:#000;left:160.90px;width:61.10px;letter-spacing:0.13px">100 м2 изолируемой</span>
<span class="dj c" style="top:572.00px;font-size:11px;color:#000;left:225.10px;width:60.90px;letter-spacing:0.08px">944.01</span>
<span class="dj c" style="top:572.00px;font-size:11px;color:#000;left:289.10px;width:60.90px;letter-spacing:0.08px">412.56</span>
<span class="dj c" style="top:572.00px;font-size:11px;color:#000;left:353.10px;width:60.90px;letter-spacing:0.08px">54.34</span>
<span class="dj" style="top:572.00px;font-size:11px;color:#000;letter-spacing:0.381px;right:880.70px;margin-right:-0.381px">дек.84</span>
<span class="dj c" style="top:572.00px;font-size:11px;color:#000;left:481.10px;width:60.90px;letter-spacing:0.08px">477.11</span>
<span class="dj" style="top:592.00px;font-size:11px;color:#000;letter-spacing:0.295px;left:33.10px">3.8-2-2</span>
<span class="dj c" style="top:592.00px;font-size:11px;color:#000;left:96.90px;width:61.10px;letter-spacing:1.03px">Оклеечная горизонтальная</span>
<span class="dj c" style="top:592.00px;font-size:11px;color:#000;left:160.90px;width:61.10px;letter-spacing:0.13px">100 м2 изолируемой</span>
<span class="dj c" style="top:592.00px;font-size:11px;color:#000;left:225.10px;width:60.90px;letter-spacing:0.08px">314.98</span>
<span class="dj c" style="top:592.00px;font-size:11px;color:#000;left:289.10px;width:60.90px;letter-spacing:0.08px">157.16</span>
<span class="dj c" style="top:592.00px;font-size:11px;color:#000;left:353.10px;width:60.90px;letter-spacing:0.08px">112.6</span>
<span class="dj c" style="top:592.00px;font-size:11px;color:#000;left:417.10px;width:60.90px;letter-spacing:0.08px">23.41</span>
<span class="dj c" style="top:592.00px;font-size:11px;color:#000;left:481.10px;width:60.90px;letter-spacing:0.08px">45.22</span>
<span class="dj" style="top:612.00px;font-size:11px;color:#000;letter-spacing:0.295px;left:33.10px">3.8-2-3</span>
<span class="dj c" style="top:612.00px;font-size:11px;color:#000;left:96.90px;width:61.10px;letter-spacing:1.03px">Оклеечная горизонтальная</span>
<span class="dj c" style="top:612.00px;font-size:11px;color:#000;left:160.90px;width:61.10px;letter-spacing:0.13px">100 м2 изолируемой</span>
<span class="dj c" style="top:612.00px;font-size:11px;color:#000;left:225.10px;width:60.90px;letter-spacing:0.08px">495.77</span>
<span class="dj c" style="top:612.00px;font-size:11px;color:#000;left:289.10px;width:60.90px;letter-spacing:0.08px">224.72</span>
<span class="dj c" style="top:612.00px;font-size:11px;color:#000;left:353.10px;width:60.90px;letter-spacing:0.08px">183.41</span>
<span class="dj c" style="top:612.00px;font-size:11px;color:#000;left:417.10px;width:60.90px;letter-spacing:0.08px">37.21</span>
<span class="dj c" style="top:612.00px;font-size:11px;color:#000;left:481.10px;width:60.90px;letter-spacing:0.08px">87.64</span>
<span class="dj" style="top:632.00px;font-size:11px;color:#000;letter-spacing:0.295px;left:33.10px">3.8-2-4</span>
<span class="dj c" style="top:632.00px;font-size:11px;color:#000;left:96.90px;width:61.10px;letter-spacing:0.54px">Обмазочная боковая</span>
<span class="dj c" style="top:632.00px;font-size:11px;color:#000;left:160.90px;width:61.10px;letter-spacing:0.13px">100 м2 изолируемой</span>
<span class="dj c" style="top:632.00px;font-size:11px;color:#000;left:225.10px;width:60.90px;letter-spacing:0.08px">1593.1</span>
<span class="dj c" style="top:632.00px;font-size:11px;color:#000;left:289.10px;width:60.90px;letter-spacing:0.08px">1068.26</span>
<span class="dj c" style="top:632.00px;font-size:11px;color:#000;left:353.10px;width:60.90px;letter-spacing:0.08px">49.13</span>
<span class="dj" style="top:632.00px;font-size:11px;color:#000;letter-spacing:0.626px;right:880.70px;margin-right:-0.626px">ноя.61</span>
<span class="dj c" style="top:632.00px;font-size:11px;color:#000;left:481.10px;width:60.90px;letter-spacing:0.08px">475.71</span>
<span class="dj" style="top:652.00px;font-size:11px;color:#000;letter-spacing:0.295px;left:33.10px">3.8-2-5</span>
<span class="dj c" style="top:652.00px;font-size:11px;color:#000;left:96.90px;width:61.10px;letter-spacing:0.6px">Гидроизоляция боковая</span>
<span class="dj c" style="top:652.00px;font-size:11px;color:#000;left:160.90px;width:61.10px;letter-spacing:0.13px">100 м2 изолируемой</span>
<span class="dj c" style="top:652.00px;font-size:11px;color:#000;left:225.10px;width:60.90px;letter-spacing:0.08px">952.97</span>
<span class="dj c" style="top:652.00px;font-size:11px;color:#000;left:289.10px;width:60.90px;letter-spacing:0.08px">711.93</span>
<span class="dj c" style="top:652.00px;font-size:11px;color:#000;left:353.10px;width:60.90px;letter-spacing:0.08px">147.31</span>
<span class="dj c" style="top:652.00px;font-size:11px;color:#000;left:417.10px;width:60.90px;letter-spacing:0.08px">28.38</span>
<span class="dj c" style="top:652.00px;font-size:11px;color:#000;left:481.10px;width:60.90px;letter-spacing:0.08px">93.73</span>
<span class="dj" style="top:672.00px;font-size:11px;color:#000;letter-spacing:0.295px;left:33.10px">3.8-2-6</span>
<span class="dj c" style="top:672.00px;font-size:11px;color:#000;left:96.90px;width:61.10px;letter-spacing:0.6px">Гидроизоляция боковая</span>
<span class="dj c" style="top:672.00px;font-size:11px;color:#000;left:160.90px;width:61.10px;letter-spacing:0.13px">100 м2 изолируемой</span>
<span class="dj c" style="top:672.00px;font-size:11px;color:#000;left:225.10px;width:60.90px;letter-spacing:0.08px">401.71</span>
<span class="dj c" style="top:672.00px;font-size:11px;color:#000;left:289.10px;width:60.90px;letter-spacing:0.08px">278.66</span>
<span class="dj c" style="top:672.00px;font-size:11px;color:#000;left:353.10px;width:60.90px;letter-spacing:0.08px">74.96</span>
<span class="dj c" style="top:672.00px;font-size:11px;color:#000;left:417.10px;width:60.90px;letter-spacing:0.08px">14.34</span>
<span class="dj c" style="top:672.00px;font-size:11px;color:#000;left:481.10px;width:60.90px;letter-spacing:0.08px">48.09</span>
<span class="dj" style="top:692.00px;font-size:11px;color:#000;letter-spacing:0.295px;left:33.10px">3.8-2-7</span>
<span class="dj c" style="top:692.00px;font-size:11px;color:#000;left:96.90px;width:61.10px;letter-spacing:0.6px">Гидроизоляция боковая</span>
<span class="dj c" style="top:692.00px;font-size:11px;color:#000;left:160.90px;width:61.10px;letter-spacing:0.13px">100 м2 изолируемой</span>
<span class="dj c" style="top:692.00px;font-size:11px;color:#000;left:225.10px;width:60.90px;letter-spacing:0.08px">586.12</span>
<span class="dj c" style="top:692.00px;font-size:11px;color:#000;left:289.10px;width:60.90px;letter-spacing:0.08px">487.11</span>
<span class="dj c" style="top:692.00px;font-size:11px;color:#000;left:353.10px;width:60.90px;letter-spacing:0.08px">71.29</span>
<span class="dj c" style="top:692.00px;font-size:11px;color:#000;left:417.10px;width:60.90px;letter-spacing:0.08px">13.35</span>
<span class="dj c" style="top:692.00px;font-size:11px;color:#000;left:481.10px;width:60.90px;letter-spacing:0.08px">27.72</span>
<span class="dj" style="top:712.00px;font-size:11px;color:#000;letter-spacing:0.295px;left:33.10px">3.8-3-1</span>
<span class="dj c" style="top:712.00px;font-size:11px;color:#000;left:96.90px;width:61.10px;letter-spacing:0.12px">Кладка стен</span>
<span class="dj c" style="top:712.00px;font-size:11px;color:#000;left:160.90px;width:59.10px;letter-spacing:0.25px">1 м3 кладки</span>
<span class="dj c" style="top:712.00px;font-size:11px;color:#000;left:225.10px;width:60.90px;letter-spacing:0.08px">53.79</span>
<span class="dj c" style="top:712.00px;font-size:11px;color:#000;left:289.10px;width:60.90px;letter-spacing:0.08px">49.44</span>
<span class="dj" style="top:712.00px;font-size:11px;color:#000;right:944.70px">0</span>
<span class="dj" style="top:712.00px;font-size:11px;color:#000;right:880.70px">0</span>
<span class="dj" style="top:712.00px;font-size:11px;color:#000;letter-spacing:0.463px;right:816.70px;margin-right:-0.463px">апр.35</span>
</div>
</body></html>
